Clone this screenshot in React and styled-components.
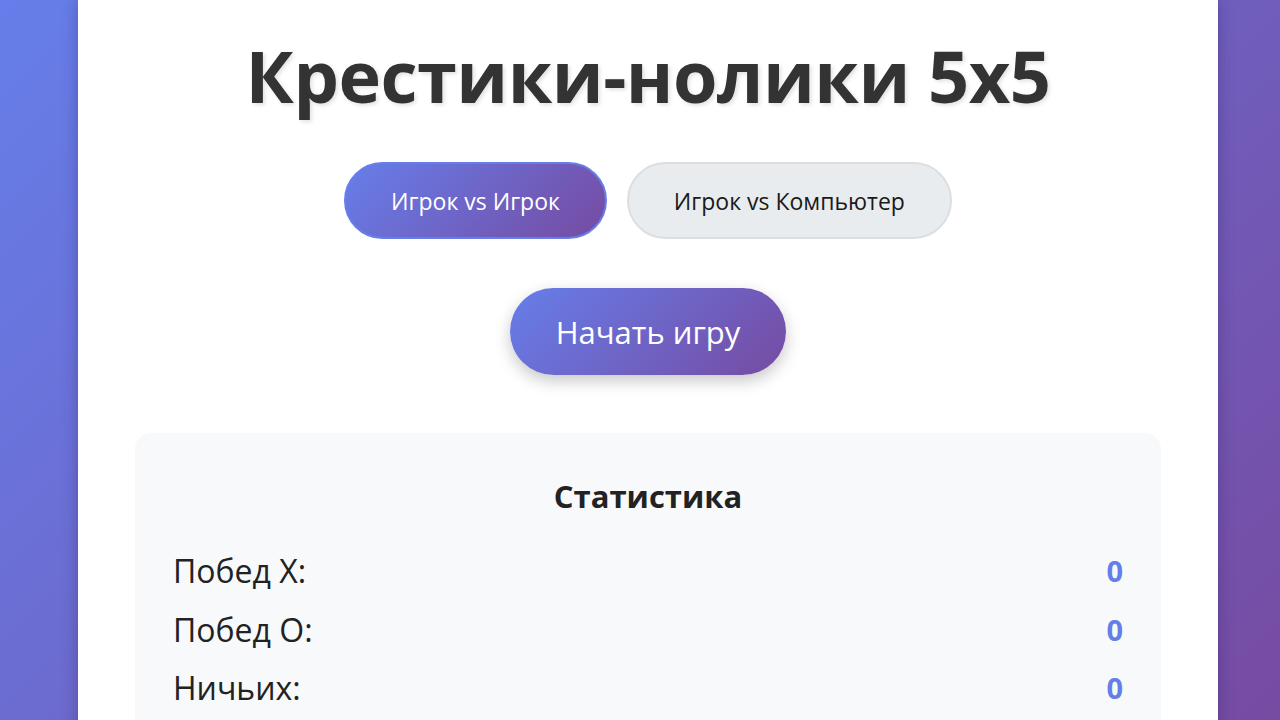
import React from "react";
import styled, { createGlobalStyle } from "styled-components";

const Global = createGlobalStyle`
  html, body { margin: 0; padding: 0; height: 100%; overflow: hidden; }
  body {
    font-family: "Open Sans", "Noto Sans", "Liberation Sans", sans-serif;
    background: linear-gradient(135deg, #667eea 0%, #764ba2 100%);
    min-height: 100vh;
  }
`;

const Page = styled.div`
  display: flex;
  justify-content: center;
  padding-left: 16px;
  min-height: 100vh;
`;

const Container = styled.div`
  width: 1140px;
  background: #ffffff;
  box-shadow: 0 0 14px rgba(40, 30, 90, 0.35);
  padding: 32px 57px 40px;
  box-sizing: border-box;
  display: flex;
  flex-direction: column;
  align-items: center;
`;

const Title = styled.h1`
  margin: 0;
  font-size: 72px;
  font-weight: 700;
  color: #333333;
  text-shadow: 2px 2px 4px rgba(0, 0, 0, 0.12);
  line-height: 1.2;
  letter-spacing: -0.5px;
`;

const Modes = styled.div`
  display: flex;
  gap: 20px;
  margin-top: 44px;
`;

const ModeButton = styled.button`
  height: 77px;
  padding: 0 45px;
  border-radius: 39px;
  font-family: inherit;
  font-size: 23px;
  cursor: pointer;
  box-sizing: border-box;
  border: 2px solid ${(p) => (p.$active ? "#667eea" : "#dcdee0")};
  background: ${(p) =>
    p.$active ? "linear-gradient(135deg, #667eea 0%, #764ba2 100%)" : "#e9ecef"};
  color: ${(p) => (p.$active ? "#ffffff" : "#1a1a1a")};
`;

const StartButton = styled.button`
  margin-top: 49px;
  height: 87px;
  padding: 0 46px;
  border: none;
  border-radius: 44px;
  font-family: inherit;
  font-size: 31px;
  color: #ffffff;
  background: linear-gradient(135deg, #667eea 0%, #764ba2 100%);
  box-shadow: 0 6px 16px rgba(0, 0, 0, 0.22);
  cursor: pointer;
`;

const Stats = styled.div`
  align-self: stretch;
  margin-top: 58px;
  background: #f8f9fa;
  border-radius: 16px;
  padding: 42px 38px 20px;
  display: flex;
  flex-direction: column;
`;

const StatsTitle = styled.h2`
  margin: 0 0 24px;
  text-align: center;
  font-size: 31px;
  line-height: 42px;
  font-weight: 700;
  color: #222222;
`;

const StatRow = styled.div`
  display: flex;
  justify-content: space-between;
  align-items: center;
  height: 58.5px;
  font-size: 32px;
  color: #222222;
`;

const StatValue = styled.span`
  font-weight: 700;
  font-size: 29px;
  color: #667eea;
`;

export default function App() {
  return (
    <>
      <Global />
      <Page>
        <Container>
          <Title>Крестики-нолики 5x5</Title>
          <Modes>
            <ModeButton $active>Игрок vs Игрок</ModeButton>
            <ModeButton>Игрок vs Компьютер</ModeButton>
          </Modes>
          <StartButton>Начать игру</StartButton>
          <Stats>
            <StatsTitle>Статистика</StatsTitle>
            <StatRow>
              <span>Побед X:</span>
              <StatValue>0</StatValue>
            </StatRow>
            <StatRow>
              <span>Побед O:</span>
              <StatValue>0</StatValue>
            </StatRow>
            <StatRow>
              <span>Ничьих:</span>
              <StatValue>0</StatValue>
            </StatRow>
          </Stats>
        </Container>
      </Page>
    </>
  );
}
